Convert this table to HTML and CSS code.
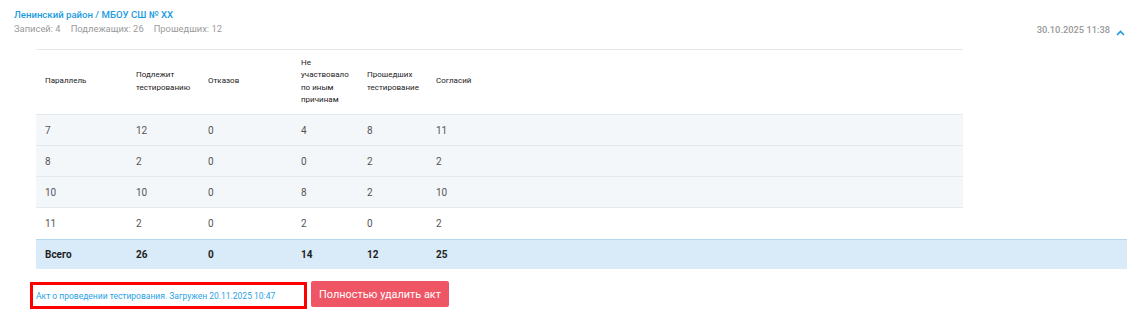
FILE: index.html
```html
<!DOCTYPE html>
<html lang="ru">
<head>
<meta charset="utf-8">
<link rel="stylesheet" href="styles.css">
</head>
<body>
<div class="panel">
  <div class="head">
    <div class="head-left">
      <div class="title">Ленинский район / МБОУ СШ № XX</div>
      <div class="stats"><span>Записей: 4</span><span>Подлежащих: 26</span><span>Прошедших: 12</span></div>
    </div>
    <div class="head-right">
      <span class="date">30.10.2025 11:38</span>
      <svg class="chev" width="9" height="6" viewBox="0 0 9 6"><path d="M1 5 L4.5 1.5 L8 5" fill="none" stroke="#1a9be0" stroke-width="1.6"/></svg>
    </div>
  </div>

  <table class="grid main">
    <colgroup><col class="c1"><col class="c2"><col class="c3"><col class="c4"><col class="c5"><col></colgroup>
    <thead>
      <tr>
        <th>Параллель</th>
        <th>Подлежит<br>тестированию</th>
        <th>Отказов</th>
        <th>Не<br>участвовало<br>по иным<br>причинам</th>
        <th>Прошедших<br>тестирование</th>
        <th>Согласий</th>
      </tr>
    </thead>
    <tbody>
      <tr class="shade"><td>7</td><td>12</td><td>0</td><td>4</td><td>8</td><td>11</td></tr>
      <tr class="shade"><td>8</td><td>2</td><td>0</td><td>0</td><td>2</td><td>2</td></tr>
      <tr class="shade"><td>10</td><td>10</td><td>0</td><td>8</td><td>2</td><td>10</td></tr>
      <tr><td>11</td><td>2</td><td>0</td><td>2</td><td>0</td><td>2</td></tr>
    </tbody>
  </table>
  <table class="grid total">
    <colgroup><col class="c1"><col class="c2"><col class="c3"><col class="c4"><col class="c5"><col></colgroup>
    <tbody>
      <tr><td>Всего</td><td>26</td><td>0</td><td>14</td><td>12</td><td>25</td></tr>
    </tbody>
  </table>

  <div class="actions">
    <div class="act-box"><a class="act-link" href="#">Акт о проведении тестирования. Загружен 20.11.2025 10:47</a></div>
    <button class="btn-del">Полностью удалить акт</button>
  </div>
</div>
</body>
</html>
```

FILE: styles.css
```css
* { box-sizing: border-box; }
html, body { margin: 0; background: #fff; }
body { font-family: Roboto, "Liberation Sans", Arial, sans-serif; color: #333; }

.panel { width: 1140px; padding: 8px 14px 0 14px; }

.head { display: flex; justify-content: space-between; align-items: flex-end; }
.title { font-size: 9.6px; line-height: 14px; font-weight: 500; color: #1a9be0; }
.stats { font-size: 9.4px; line-height: 14px; color: #9a9a9a; display: flex; gap: 10px; }
.head-right { display: flex; align-items: center; gap: 6px; padding-right: 1px; line-height: 14px; height: 14px; margin-bottom: -1px; }
.date { font-size: 9.3px; font-weight: 500; color: #999; }
.chev { margin-top: 6px; }

.grid { border-collapse: collapse; table-layout: fixed; margin-left: 22px; }
.grid.main { width: 927px; margin-top: 13px; border-top: 1px solid #e4e9ee; }
.grid.total { width: 1091px; }
.c1 { width: 91px; }
.c2 { width: 72px; }
.c3 { width: 93px; }
.c4 { width: 66px; }
.c5 { width: 69px; }

.grid th { font-size: 8px; line-height: 12.3px; font-weight: 400; color: #222; text-align: left; vertical-align: middle; padding: 7px 9px 8px; height: 64px; border-bottom: 1px solid #e4e9ee; }
.grid td { font-size: 10px; color: #555; text-align: left; padding: 0 9px; height: 31px; border-bottom: 1px solid #e4e9ee; }
.grid tr.shade td { background: #f4f7fa; }
.grid.main tbody tr:last-child td { border-bottom: none; }
.grid.total td { background: #d9eaf8; border-top: 1px solid #b5d8f1; border-bottom: none; height: 30px; font-weight: 700; color: #222; }

.actions { display: flex; align-items: flex-start; gap: 4px; margin: 12px 0 0 16px; }
.act-box { border: 3px solid #ff0000; height: 27px; width: 277px; display: flex; align-items: center; padding-left: 3px; margin-top: 1px; }
.act-link { font-size: 8.5px; color: #2aa3e6; text-decoration: none; white-space: nowrap; }
.btn-del { height: 26px; width: 138px; background: #ef5665; border: none; border-radius: 2px; color: #fff; font-family: Roboto, "Liberation Sans", Arial, sans-serif; font-size: 10.9px; padding: 0; }
```
